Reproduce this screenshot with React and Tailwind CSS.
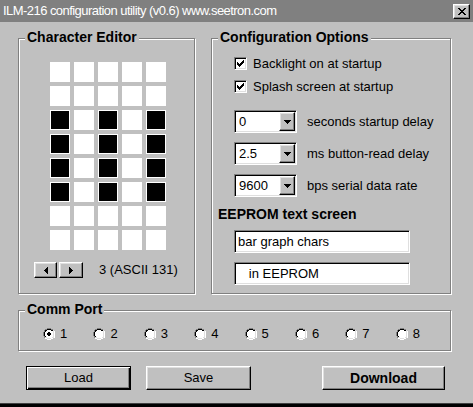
import React from "react";

const COLORS = { K: "#000000", G: "#808080", W: "#ffffff", L: "#dfdfdf", X: "#000000" };

function Pixels({ rows, className = "" }) {
  const w = rows[0].length;
  const h = rows.length;
  const rects = [];
  rows.forEach((row, y) => {
    row.split("").forEach((c, x) => {
      if (c !== "." && COLORS[c]) {
        rects.push(<rect key={`${x}-${y}`} x={x} y={y} width="1" height="1" fill={COLORS[c]} />);
      }
    });
  });
  return (
    <svg width={w} height={h} viewBox={`0 0 ${w} ${h}`} shapeRendering="crispEdges" className={className}>
      {rects}
    </svg>
  );
}

const CLOSE_X = ["XX....XX", ".XX..XX.", "..XXXX..", "...XX...", "..XXXX..", ".XX..XX.", "XX....XX"];
const DOWN = ["XXXXXXX", ".XXXXX.", "..XXX..", "...X..."];
const LEFT = ["...X", "..XX", ".XXX", "XXXX", ".XXX", "..XX", "...X"];
const RIGHT = ["X...", "XX..", "XXX.", "XXXX", "XXX.", "XX..", "X..."];
const CHECK = ["......X", ".....XX", "X...XXX", "XX.XXX.", "XXXXX..", ".XXX...", "..X...."];
const RADIO = [
  "....GGGG....",
  "..GGKKKKGG..",
  ".GKKWWWWKKL.",
  ".GKWWWWWWWLW",
  "GKWWWWWWWWLW",
  "GKWWWWWWWWLW",
  "GKWWWWWWWWLW",
  "GKWWWWWWWWLW",
  ".GKWWWWWWWLW",
  ".GLLWWWWWLLW",
  "..WWLLLLWW..",
  "....WWWW....",
];
const RADIO_ON = [
  "....GGGG....",
  "..GGKKKKGG..",
  ".GKKWWWWKKL.",
  ".GKWWWWWWWLW",
  "GKWWWKKWWWLW",
  "GKWWKKKKWWLW",
  "GKWWKKKKWWLW",
  "GKWWWKKWWWLW",
  ".GKWWWWWWWLW",
  ".GLLWWWWWLLW",
  "..WWLLLLWW..",
  "....WWWW....",
];

const raised =
  "border border-t-white border-l-white border-r-black border-b-black shadow-[inset_-1px_-1px_0_#808080,inset_1px_1px_0_#dfdfdf] bg-[#c0c0c0]";
const sunken =
  "border border-t-[#808080] border-l-[#808080] border-r-white border-b-white shadow-[inset_1px_1px_0_#000,inset_-1px_-1px_0_#dfdfdf]";
const etched =
  "border border-[#808080] shadow-[1px_1px_0_#fff,inset_1px_1px_0_#fff]";

function Group({ title, className = "", children }) {
  return (
    <div className={`relative ${etched} ${className}`}>
      <span className="absolute left-[6px] top-[-10px] px-[2px] bg-[#c0c0c0] font-bold text-[14px] leading-[16px]">
        {title}
      </span>
      {children}
    </div>
  );
}

function CheckRow({ label, className = "" }) {
  return (
    <div className={`flex items-center h-[13px] ${className}`}>
      <div className={`w-[13px] h-[13px] bg-white ${sunken} flex items-center justify-center`}>
        <Pixels rows={CHECK} />
      </div>
      <span className="ml-[6px] leading-[16px]">{label}</span>
    </div>
  );
}

function Combo({ value, label, className = "" }) {
  return (
    <div className={`flex items-center ${className}`}>
      <div className={`w-[63px] h-[23px] p-[1px] flex ${sunken}`}>
        <div className="flex-1 bg-white pl-[3px] flex items-center leading-[16px]">{value}</div>
        <div className={`w-[16px] h-full ${raised} flex items-center justify-center`}>
          <Pixels rows={DOWN} />
        </div>
      </div>
      <span className="ml-[10px] leading-[16px]">{label}</span>
    </div>
  );
}

function TextBox({ value, className = "" }) {
  return (
    <div className={`w-[176px] h-[23px] bg-white ${sunken} flex items-center pl-[3px] leading-[16px] whitespace-pre ${className}`}>
      {value}
    </div>
  );
}

const GRID = [
  "00000",
  "00000",
  "10101",
  "10101",
  "10101",
  "10101",
  "00000",
  "00000",
];

export default function App() {
  return (
    <div className="w-[473px] h-[407px] bg-[#c0c0c0] flex flex-col font-['Liberation_Sans',Arial,sans-serif] text-[13px] text-black overflow-hidden">
      {/* Title bar */}
      <div className="h-[22px] bg-[#808080] flex items-center justify-between pl-[3px] pr-[3px] shrink-0">
        <span className="text-white text-[13px] tracking-[-0.55px] leading-[16px]">ILM-216 configuration utility (v0.6) www.seetron.com</span>
        <div className={`w-[17px] h-[15px] ${raised} flex items-center justify-center`}>
          <Pixels rows={CLOSE_X} />
        </div>
      </div>

      {/* Body */}
      <div className="flex-1 px-[18px] pt-[16px]">
        <div className="flex gap-[16px]">
          <Group title="Character Editor" className="w-[177px] h-[256px]">
            <div className="flex flex-col pt-[23px]">
              <div className="ml-[31px] grid grid-cols-[repeat(5,20px)] gap-[4px]">
                {GRID.flatMap((row, r) =>
                  row.split("").map((c, i) =>
                    c === "1" ? (
                      <div key={`${r}-${i}`} className="w-[20px] h-[20px] bg-black border border-white" />
                    ) : (
                      <div key={`${r}-${i}`} className="w-[20px] h-[20px] bg-white" />
                    )
                  )
                )}
              </div>
              <div className="mt-[12px] ml-[15px] flex items-center">
                <div className={`w-[23px] h-[16px] ${raised} flex items-center justify-center`}>
                  <Pixels rows={LEFT} />
                </div>
                <div className={`ml-[2px] w-[24px] h-[16px] ${raised} flex items-center justify-center`}>
                  <Pixels rows={RIGHT} />
                </div>
                <span className="ml-[16px] leading-[16px]">3 (ASCII 131)</span>
              </div>
            </div>
          </Group>

          <Group title="Configuration Options" className="w-[240px] h-[256px]">
            <div className="flex flex-col pt-[18px] pl-[22px]">
              <CheckRow label="Backlight on at startup" />
              <CheckRow label="Splash screen at startup" className="mt-[10px]" />
              <Combo value="0" label="seconds startup delay" className="mt-[17px]" />
              <Combo value="2.5" label="ms button-read delay" className="mt-[9px]" />
              <Combo value="9600" label="bps serial data rate" className="mt-[9px]" />
              <div className="mt-[9px] ml-[-16px] font-bold text-[14px] leading-[16px]">EEPROM text screen</div>
              <TextBox value="bar graph chars" className="mt-[8px]" />
              <TextBox value="   in EEPROM" className="mt-[9px]" />
            </div>
          </Group>
        </div>

        <Group title="Comm Port" className="mt-[16px] w-[433px] h-[41px]">
          <div className="flex pt-[17px] pl-[24px]">
            {[1, 2, 3, 4, 5, 6, 7, 8].map((n) => (
              <div key={n} className="w-[50.4px] h-[12px] flex items-center shrink-0">
                <Pixels rows={n === 1 ? RADIO_ON : RADIO} />
                <span className="ml-[5px] leading-[16px]">{n}</span>
              </div>
            ))}
          </div>
        </Group>

        <div className="mt-[15px] flex">
          <div className="ml-[8px] w-[105px] h-[24px] border border-black shadow-[inset_1px_1px_0_#fff,inset_-1px_-1px_0_#000,inset_-2px_-2px_0_#808080] flex items-center justify-center leading-[16px]">
            Load
          </div>
          <div className={`ml-[15px] w-[105px] h-[24px] ${raised} flex items-center justify-center leading-[16px]`}>
            Save
          </div>
          <div className={`ml-[71px] w-[123px] h-[24px] ${raised} flex items-center justify-center font-bold text-[14px] leading-[16px]`}>
            Download
          </div>
        </div>
      </div>

      {/* Bottom frame */}
      <div className="h-[4px] shrink-0 border-t border-[#404040] bg-black" />
    </div>
  );
}
